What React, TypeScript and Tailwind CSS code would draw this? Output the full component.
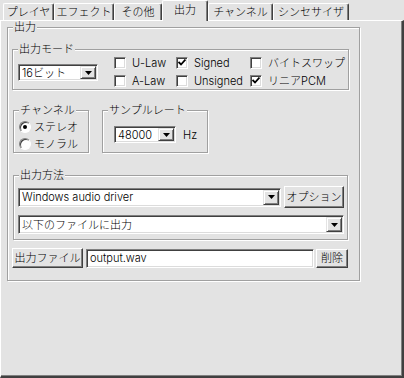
import type { ReactNode } from "react";

const BG = "bg-[#e3e3e3]";

function Group({ label, className, children }: { label: string; className: string; children?: ReactNode }) {
  return (
    <div className={`border border-[#a0a0a0] shadow-[inset_1px_1px_0_#fff,1px_1px_0_#fff] ${className}`}>
      <div className={`-mt-[7px] ml-[5px] w-fit px-[1px] leading-[13px] ${BG}`}>{label}</div>
      {children}
    </div>
  );
}

function Arrow() {
  return (
    <svg width="7" height="4" viewBox="0 0 7 4">
      <polygon points="0,0 7,0 3.5,4" fill="#000" />
    </svg>
  );
}

function Combo({ value, className }: { value: string; className: string }) {
  return (
    <div
      className={`flex items-center bg-white border border-t-[#808080] border-l-[#808080] border-r-white border-b-white shadow-[inset_1px_1px_0_#404040,inset_-1px_-1px_0_#dcdcdc] ${className}`}
    >
      <div className="flex-1 pl-[3px] leading-[14px] whitespace-nowrap">{value}</div>
      <div className="mr-[1px] h-[calc(100%-2px)] w-[16px] flex items-center justify-center bg-[#e3e3e3] border border-t-[#e3e3e3] border-l-[#e3e3e3] border-r-[#404040] border-b-[#404040] shadow-[inset_1px_1px_0_#fff,inset_-1px_-1px_0_#808080]">
        <Arrow />
      </div>
    </div>
  );
}

function Button({ label, className }: { label: string; className: string }) {
  return (
    <div
      className={`flex items-center justify-center leading-[14px] ${BG} border border-t-white border-l-white border-r-[#404040] border-b-[#404040] shadow-[inset_-1px_-1px_0_#808080] ${className}`}
    >
      {label}
    </div>
  );
}

function Check({ label, checked }: { label: string; checked?: boolean }) {
  return (
    <div className="flex items-center gap-[6px] h-[13px] leading-[14px] whitespace-nowrap">
      <div className="w-[12px] h-[12px] flex items-center justify-center bg-white border border-t-[#808080] border-l-[#808080] border-r-white border-b-white shadow-[inset_1px_1px_0_#404040,inset_-1px_-1px_0_#dcdcdc]">
        {checked && (
          <svg width="8" height="7" viewBox="0 0 8 7">
            <polyline points="0.5,3 3,5.5 7.5,0.5" fill="none" stroke="#000" strokeWidth="1.8" />
          </svg>
        )}
      </div>
      {label}
    </div>
  );
}

function Radio({ label, checked }: { label: string; checked?: boolean }) {
  return (
    <div className="flex items-center gap-[3px] h-[13px] leading-[14px] whitespace-nowrap">
      <div className="w-[12px] h-[12px] rounded-full flex items-center justify-center bg-white border border-t-[#808080] border-l-[#808080] border-r-white border-b-white shadow-[inset_1px_1px_0_#404040]">
        {checked && <div className="w-[4px] h-[4px] rounded-full bg-black" />}
      </div>
      {label}
    </div>
  );
}

const tabs = [
  { label: "プレイヤ", w: "w-[51px]" },
  { label: "エフェクト", w: "w-[60px]" },
  { label: "その他", w: "w-[48px]" },
  { label: "出力", w: "w-[46px]", active: true },
  { label: "チャンネル", w: "w-[65px]" },
  { label: "シンセサイザ", w: "w-[76px]" },
];

export default function App() {
  return (
    <div className={`w-[404px] h-[378px] flex flex-col ${BG} text-black text-[11px] font-light [font-family:'Inter','Noto_Sans_CJK_JP',sans-serif]`}>
      {/* タブ */}
      <div className="h-[20px] flex items-end pl-[3px]">
        {tabs.map((t) =>
          t.active ? (
            <div
              key={t.label}
              className={`${t.w} h-[21px] -mb-px relative z-10 ${BG} flex items-center justify-center pb-[3px] leading-[14px] rounded-t-[2px] border-l border-t border-l-white border-t-white border-r border-r-[#404040] shadow-[inset_-1px_0_0_#808080]`}
            >
              {t.label}
            </div>
          ) : (
            <div
              key={t.label}
              className={`${t.w} h-[17px] flex items-center justify-center leading-[14px] rounded-t-[2px] border-l border-t border-l-white border-t-white border-r border-r-[#404040] shadow-[inset_-1px_0_0_#808080]`}
            >
              {t.label}
            </div>
          )
        )}
      </div>

      {/* タブページ */}
      <div className="flex-1 border-l border-t border-l-white border-t-white border-r-2 border-b-2 border-r-[#404040] border-b-[#404040] shadow-[inset_-1px_-1px_0_#808080]">
        <Group label="出力" className="mt-[6px] ml-[6px] w-[353px] h-[254px]">
          <Group label="出力モード" className="mt-[15px] ml-[4px] w-[337px] h-[41px]">
            <div className="flex items-start h-[32px] pl-[5px]">
              <Combo value="16ビット" className="mt-[8px] w-[80px] h-[17px]" />
              <div className="ml-[16px] flex flex-col gap-[5px] w-[62px]">
                <Check label="U-Law" />
                <Check label="A-Law" />
              </div>
              <div className="flex flex-col gap-[5px] w-[74px]">
                <Check label="Signed" checked />
                <Check label="Unsigned" />
              </div>
              <div className="flex flex-col gap-[5px]">
                <Check label="バイトスワップ" />
                <Check label="リニアPCM" checked />
              </div>
            </div>
          </Group>

          <div className="flex mt-[20px] ml-[5px]">
            <Group label="チャンネル" className="w-[76px] h-[43px]">
              <div className="flex flex-col gap-[4px] pt-[3px] pl-[5px]">
                <Radio label="ステレオ" checked />
                <Radio label="モノラル" />
              </div>
            </Group>
            <Group label="サンプルレート" className="ml-[13px] w-[106px] h-[43px]">
              <div className="flex items-center mt-[9px] pl-[11px] gap-[7px]">
                <Combo value="48000" className="w-[62px] h-[17px]" />
                <span className="leading-[14px]">Hz</span>
              </div>
            </Group>
          </div>

          <Group label="出力方法" className="mt-[22px] ml-[5px] w-[335px] h-[65px]">
            <div className="flex items-center h-[22px] mt-[4px] pl-[4px] gap-[3px]">
              <Combo value="Windows audio driver" className="w-[263px] h-[19px]" />
              <Button label="オプション" className="w-[60px] h-[22px]" />
            </div>
            <Combo value="以下のファイルに出力" className="mt-[7px] ml-[4px] w-[326px] h-[19px]" />
          </Group>

          <div className="flex items-center mt-[8px] ml-[4px]">
            <Button label="出力ファイル" className="w-[71px] h-[20px]" />
            <div className="ml-[3px] w-[228px] h-[19px] flex items-center pl-[3px] leading-[14px] bg-white border border-t-[#808080] border-l-[#808080] border-r-white border-b-white shadow-[inset_1px_1px_0_#404040,inset_-1px_-1px_0_#dcdcdc]">
              output.wav
            </div>
            <Button label="削除" className="ml-[2px] w-[32px] h-[19px]" />
          </div>
        </Group>
      </div>
    </div>
  );
}
